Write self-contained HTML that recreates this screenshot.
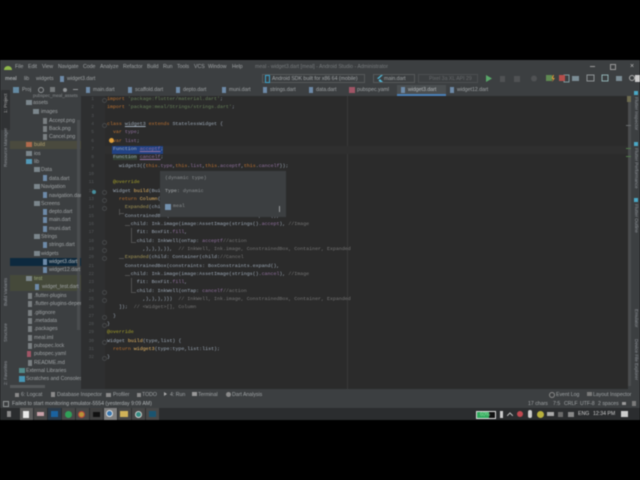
<!DOCTYPE html>
<html><head><meta charset="utf-8"><style>
html,body{margin:0;padding:0;background:#000}
#r{position:relative;width:640px;height:480px;background:#000;overflow:hidden;font-family:"Liberation Sans",sans-serif;color:#a0a4a6;font-size:5px;filter:blur(.5px)}
#r div,#r pre,#r svg{position:absolute}
.t{white-space:nowrap;line-height:8px;font-size:5.2px}
pre.c{margin:0;left:107px;font:4.97px/8px "Liberation Mono",monospace;color:#a0adbb}
.k{color:#bd7230}.s{color:#67825a}.g{color:#767676}.y{color:#a8a328}.f{color:#eebb66}.p{color:#9272a0}.u{color:#a89a58}
.l{left:84px;width:10px;text-align:right;font:4.5px/8px "Liberation Mono",monospace;color:#55585a}
.v{white-space:nowrap;font-size:4.6px;line-height:6px;transform-origin:0 0;color:#90949a}
.fd{width:6px;height:5px;background:#7b868c}
.df{width:4px;height:6px;background:#6d8aa8}
.ff{width:4px;height:6px;background:#7a7f82}
.fo{width:3px;height:3px;border:1px solid #464849;border-radius:50%;left:102px}
.tb{top:408px;height:12px;width:13px;background:#474747}
</style></head><body><div id="r">
<!-- title -->
<div style="left:0;top:60px;width:640px;height:36px;background:#3c3f41"></div>
<svg style="left:4px;top:64px" width="8" height="6"><path d="M0 6a4 4 0 0 1 8 0z" fill="#8fb84a"/></svg>
<div class="t" style="left:15px;top:63px">File</div><div class="t" style="left:28px;top:63px">Edit</div><div class="t" style="left:42px;top:63px">View</div><div class="t" style="left:58px;top:63px">Navigate</div><div class="t" style="left:83px;top:63px">Code</div><div class="t" style="left:100px;top:63px">Analyze</div><div class="t" style="left:123px;top:63px">Refactor</div><div class="t" style="left:147px;top:63px">Build</div><div class="t" style="left:163px;top:63px">Run</div><div class="t" style="left:177px;top:63px">Tools</div><div class="t" style="left:194px;top:63px">VCS</div><div class="t" style="left:208px;top:63px">Window</div><div class="t" style="left:232px;top:63px">Help</div>
<div class="t" style="left:255px;top:63px;color:#777b7d">meal - widget3.dart [meal] - Android Studio - Administrator</div>
<div style="left:590px;top:66px;width:5px;height:1px;background:#999"></div><div style="left:610px;top:64px;width:4px;height:4px;border:1px solid #999"></div><div class="t" style="left:630px;top:63px;font-size:7px;color:#bbb">×</div>
<!-- nav bar -->
<div class="t" style="left:5px;top:75px;font-weight:bold">meal</div><div class="t" style="left:24px;top:75px">lib</div><div class="t" style="left:36px;top:75px">widgets</div><div class="df" style="left:60px;top:76px"></div><div class="t" style="left:67px;top:75px">widget3.dart</div>
<div style="left:262px;top:74px;width:103px;height:9px;border:1px solid #555859;box-sizing:border-box"></div>
<div style="left:265px;top:75px;width:3px;height:6px;border:1px solid #3aa0c8"></div>
<div class="t" style="left:272px;top:75px">Android SDK built for x86 64 (mobile)</div>
<div style="left:373px;top:74px;width:42px;height:9px;border:1px solid #555859;box-sizing:border-box"></div>
<svg style="left:377px;top:75px" width="6" height="7"><path d="M0 3.500L4 0h2L1.500 4zM3 7L1.500 5.500 3 4l3 3z" fill="#4fb6d6"/></svg>
<div class="t" style="left:384px;top:75px">main.dart</div>
<div style="left:418px;top:74px;width:60px;height:9px;border:1px solid #4b4e50;box-sizing:border-box"></div>
<div class="t" style="left:429px;top:75px;color:#66696b">Pixel 3a XL API 29</div>
<svg style="left:484px;top:74px" width="100" height="9">
<path d="M2 1l6 3.500-6 3.500z" fill="#59a869"/><rect x="16" y="2" width="5" height="6" fill="#505254"/><rect x="30" y="2" width="6" height="6" fill="#505254"/><circle cx="50" cy="4.500" r="3" fill="#505254"/><path d="M69 1l-2 4h2l-1 3 3-4h-2l1-3z" fill="#d89a3a"/><rect x="80" y="1" width="5" height="7" fill="none" stroke="#7f9a9f"/></svg>
<svg style="left:584px;top:74px" width="56" height="9"><rect x="3" y="1" width="7" height="6" fill="none" stroke="#8f9395"/><rect x="18" y="1" width="6" height="6" fill="none" stroke="#8fb0b2"/><rect x="32" y="2" width="6" height="5" fill="#7b8d95"/><circle cx="48" cy="4" r="2.500" fill="none" stroke="#aaa"/></svg>
<div style="left:546px;top:75px;width:6px;height:6px;background:#5f8a52"></div>
<div style="left:559px;top:75px;width:6px;height:6px;background:#b54e4b"></div>
<div style="left:572px;top:76px;width:7px;height:5px;background:#7b8d95"></div>
<div style="left:635px;top:75px;width:5px;height:7px;background:#ccc"></div>
<!-- tool row left -->
<div style="left:13px;top:87px;width:6px;height:6px;background:#648aa2"></div><div class="t" style="left:22px;top:86px">Proj</div>
<div style="left:38px;top:87px;width:4px;height:4px;border:1px solid #909496;border-radius:50%"></div>
<div style="left:50px;top:87px;width:5px;height:5px;background:#75797b"></div><div style="left:63px;top:88px;width:4px;height:4px;border-radius:50%;background:#909496"></div><div style="left:73px;top:89px;width:5px;height:1px;background:#909496"></div>
<!-- tabs -->
<div style="left:397px;top:85px;width:49px;height:11px;background:#4a4e50"></div><div style="left:397px;top:94px;width:49px;height:2px;background:#4a80b7"></div>
<div class="df" style="left:86px;top:87px"></div><div class="t" style="left:93px;top:86px">main.dart</div>
<div class="df" style="left:128px;top:87px"></div><div class="t" style="left:135px;top:86px">scaffold.dart</div>
<div class="df" style="left:176px;top:87px"></div><div class="t" style="left:183px;top:86px">depto.dart</div>
<div class="df" style="left:222px;top:87px"></div><div class="t" style="left:229px;top:86px">muni.dart</div>
<div class="df" style="left:263px;top:87px"></div><div class="t" style="left:270px;top:86px">strings.dart</div>
<div class="df" style="left:309px;top:87px"></div><div class="t" style="left:316px;top:86px">data.dart</div>
<div style="left:349px;top:87px;width:6px;height:6px;background:#a05566"></div><div class="t" style="left:357px;top:86px">pubspec.yaml</div>
<div class="df" style="left:401px;top:87px"></div><div class="t" style="left:408px;top:86px;color:#b8bcbe">widget3.dart</div>
<div class="df" style="left:450px;top:87px"></div><div class="t" style="left:457px;top:86px">widget12.dart</div>
<!-- left strip -->
<div style="left:0;top:96px;width:10px;height:293px;background:#3c3f41"></div>
<div style="left:1px;top:90px;width:9px;height:40px;background:#303234"></div>
<div class="v" style="left:3px;top:113px;transform:rotate(-90deg);color:#aaa">1: Project</div>
<div class="v" style="left:3px;top:167px;transform:rotate(-90deg)">Resource Manager</div>
<div class="v" style="left:3px;top:306px;transform:rotate(-90deg)">Build Variants</div>
<div class="v" style="left:3px;top:342px;transform:rotate(-90deg)">Structure</div>
<div class="v" style="left:3px;top:385px;transform:rotate(-90deg)">2: Favorites</div>
<!-- project panel -->
<div style="left:10px;top:96px;width:71px;height:293px;background:#3c3f41"></div>
<div style="left:10px;top:141px;width:71px;height:8px;background:#4a4a3e"></div>
<div style="left:10px;top:258px;width:71px;height:8px;background:#0d293e"></div>
<div style="left:10px;top:275px;width:71px;height:16px;background:#45493a"></div>
<div style="left:77px;top:120px;width:3px;height:210px;background:#4a4d4f"></div>
<div style="left:10px;top:385px;width:35px;height:3px;background:#55585a"></div>
<div class="t" style="left:33px;top:92px;font-size:4.5px;color:#8a8e90">pubspec_meal_assets</div>
<div class="fd" style="left:26px;top:100px"></div><div class="t" style="left:33px;top:99px">assets</div>
<div class="fd" style="left:33px;top:109px"></div><div class="t" style="left:41px;top:108px">images</div>
<div class="ff" style="left:43px;top:118px"></div><div class="t" style="left:49px;top:117px">Accept.png</div>
<div class="ff" style="left:43px;top:126px"></div><div class="t" style="left:49px;top:125px">Back.png</div>
<div class="ff" style="left:43px;top:134px"></div><div class="t" style="left:49px;top:133px">Cancel.png</div>
<div class="fd" style="left:26px;top:142px;background:#b06a4c"></div><div class="t" style="left:34px;top:141px;color:#b0a070">build</div>
<div class="fd" style="left:26px;top:151px"></div><div class="t" style="left:34px;top:150px">ios</div>
<div class="fd" style="left:26px;top:159px;background:#5299b8"></div><div class="t" style="left:34px;top:158px">lib</div>
<div class="fd" style="left:34px;top:167px"></div><div class="t" style="left:41px;top:166px">Data</div>
<div class="df" style="left:43px;top:175px"></div><div class="t" style="left:49px;top:175px">data.dart</div>
<div class="fd" style="left:34px;top:184px"></div><div class="t" style="left:41px;top:183px">Navigation</div>
<div class="df" style="left:43px;top:192px"></div><div class="t" style="left:49px;top:192px">navigation.dar</div>
<div class="fd" style="left:34px;top:201px"></div><div class="t" style="left:41px;top:200px">Screens</div>
<div class="df" style="left:43px;top:209px"></div><div class="t" style="left:49px;top:208px">depto.dart</div>
<div class="df" style="left:43px;top:217px"></div><div class="t" style="left:49px;top:216px">main.dart</div>
<div class="df" style="left:43px;top:226px"></div><div class="t" style="left:49px;top:225px">muni.dart</div>
<div class="fd" style="left:34px;top:234px"></div><div class="t" style="left:41px;top:233px">Strings</div>
<div class="df" style="left:43px;top:242px"></div><div class="t" style="left:49px;top:241px">strings.dart</div>
<div class="fd" style="left:34px;top:251px"></div><div class="t" style="left:41px;top:250px">widgets</div>
<div class="df" style="left:43px;top:259px"></div><div class="t" style="left:49px;top:258px;color:#b8bcbe">widget3.dart</div>
<div class="df" style="left:43px;top:267px"></div><div class="t" style="left:49px;top:266px">widget12.dart</div>
<div class="fd" style="left:26px;top:276px"></div><div class="t" style="left:34px;top:275px;color:#9aa87a">test</div>
<div class="df" style="left:35px;top:284px"></div><div class="t" style="left:42px;top:283px">widget_test.dart</div>
<div class="ff" style="left:28px;top:293px"></div><div class="t" style="left:34px;top:292px">.flutter-plugins</div>
<div class="ff" style="left:28px;top:301px"></div><div class="t" style="left:34px;top:300px">.flutter-plugins-depen</div>
<div class="ff" style="left:28px;top:310px"></div><div class="t" style="left:34px;top:309px">.gitignore</div>
<div class="ff" style="left:28px;top:318px"></div><div class="t" style="left:34px;top:317px">.metadata</div>
<div class="ff" style="left:28px;top:326px"></div><div class="t" style="left:34px;top:325px">.packages</div>
<div class="ff" style="left:28px;top:335px"></div><div class="t" style="left:34px;top:334px">meal.iml</div>
<div class="ff" style="left:28px;top:343px"></div><div class="t" style="left:34px;top:342px">pubspec.lock</div>
<div class="ff" style="left:27px;top:351px;background:#a05566"></div><div class="t" style="left:34px;top:350px">pubspec.yaml</div>
<div class="ff" style="left:28px;top:360px"></div><div class="t" style="left:34px;top:359px">README.md</div>
<div style="left:19px;top:368px;width:6px;height:5px;background:#528c8c"></div><div class="t" style="left:26px;top:367px">External Libraries</div>
<div style="left:19px;top:376px;width:6px;height:6px;background:#4796b5"></div><div class="t" style="left:26px;top:375px">Scratches and Consoles</div>
<!-- editor -->
<div style="left:81px;top:96px;width:550px;height:293px;background:#2b2b2b"></div>
<div style="left:81px;top:96px;width:24px;height:293px;background:#2e2f30"></div>
<div style="left:347px;top:96px;width:1px;height:293px;background:#383838"></div>
<div style="left:105px;top:146px;width:523px;height:8px;background:#2f2f2f"></div>
<div style="left:112px;top:146px;width:51px;height:8px;background:#214283"></div>
<div style="left:109px;top:138px;width:5px;height:5px;border-radius:50%;background:#e0a03b"></div>
<div class="l" style="top:96px">1</div><div class="l" style="top:104px">2</div><div class="l" style="top:113px">3</div><div class="l" style="top:121px">4</div><div class="l" style="top:129px">5</div><div class="l" style="top:138px">6</div><div class="l" style="top:146px">7</div><div class="l" style="top:154px">8</div><div class="l" style="top:163px">9</div><div class="l" style="top:171px">10</div><div class="l" style="top:179px">11</div><div class="l" style="top:188px">12</div><div class="l" style="top:196px">13</div><div class="l" style="top:204px">14</div><div class="l" style="top:213px">15</div><div class="l" style="top:221px">16</div><div class="l" style="top:229px">17</div><div class="l" style="top:238px">18</div><div class="l" style="top:246px">19</div><div class="l" style="top:254px">20</div><div class="l" style="top:263px">21</div><div class="l" style="top:271px">22</div><div class="l" style="top:279px">23</div><div class="l" style="top:288px">24</div><div class="l" style="top:296px">25</div><div class="l" style="top:304px">26</div><div class="l" style="top:313px">27</div><div class="l" style="top:321px">28</div><div class="l" style="top:329px">29</div><div class="l" style="top:338px">30</div><div class="l" style="top:346px">31</div><div class="l" style="top:354px">32</div>
<div style="left:92px;top:190px;width:4px;height:4px;border-radius:50%;background:#478f9f"></div>
<div class="fo" style="top:98px"></div><div class="fo" style="top:123px"></div><div class="fo" style="top:190px"></div><div class="fo" style="top:198px"></div><div class="fo" style="top:206px"></div><div class="fo" style="top:240px"></div><div class="fo" style="top:248px"></div><div class="fo" style="top:256px"></div><div class="fo" style="top:290px"></div><div class="fo" style="top:298px"></div><div class="fo" style="top:315px"></div><div class="fo" style="top:323px"></div><div class="fo" style="top:340px"></div><div class="fo" style="top:356px"></div>
<pre class="c" style="top:96px"><span class="k">import</span> <span class="s">'package:flutter/material.dart'</span>;</pre>
<pre class="c" style="top:104px"><span class="k">import</span> <span class="s">'package:meal/Strings/strings.dart'</span>;</pre>
<pre class="c" style="top:121px"><span class="k">class</span> <u>widget3</u> <span class="k">extends</span> StatelessWidget {</pre>
<pre class="c" style="top:129px">  <span class="k">var</span> <span class="p">type</span>;</pre>
<pre class="c" style="top:138px">  <span class="k">var</span> <span class="p">list</span>;</pre>
<pre class="c" style="top:146px">  Function <u class="p">acceptf</u>;</pre>
<pre class="c" style="top:154px">  <span style="background:#344134">Function</span> <u class="p">cancelf</u>;</pre>
<pre class="c" style="top:163px">    widget3({<span class="k">this</span>.<span class="p">type</span>,<span class="k">this</span>.<span class="p">list</span>,<span class="k">this</span>.<span class="p">acceptf</span>,<span class="k">this</span>.<span class="p">cancelf</span>});</pre>
<pre class="c" style="top:179px">  <span class="y">@override</span></pre>
<pre class="c" style="top:188px">  Widget <span class="f">build</span>(BuildContext context) {</pre>
<pre class="c" style="top:196px">    <span class="k">return</span> <span class="f">Column</span>(children: &lt;Widget&gt;[</pre>
<pre class="c" style="top:204px">      <span class="u">Expanded</span>(child: Container(child:<span class="g">//Accept</span></pre>
<pre class="c" style="top:213px">      ConstrainedBox(constraints: BoxConstraints.expand(),</pre>
<pre class="c" style="top:221px">        child: Ink.image(image:AssetImage(strings().<span class="p">accept</span>), <span class="g">//Image</span></pre>
<pre class="c" style="top:229px">          fit: BoxFit.<span class="p">fill</span>,</pre>
<pre class="c" style="top:238px">          child: InkWell(onTap: <span class="p">acceptf</span><span class="g">//action</span></pre>
<pre class="c" style="top:246px">            ,),),),)),  <span class="g">// InkWell, Ink.image, ConstrainedBox, Container, Expanded</span></pre>
<pre class="c" style="top:254px">      <span class="u">Expanded</span>(child: Container(child:<span class="g">//Cancel</span></pre>
<pre class="c" style="top:263px">      ConstrainedBox(constraints: BoxConstraints.expand(),</pre>
<pre class="c" style="top:271px">        child: Ink.image(image:AssetImage(strings().<span class="p">cancel</span>), <span class="g">//Image</span></pre>
<pre class="c" style="top:279px">          fit: BoxFit.<span class="p">fill</span>,</pre>
<pre class="c" style="top:288px">          child: InkWell(onTap: <span class="p">cancelf</span><span class="g">//action</span></pre>
<pre class="c" style="top:296px">            ,),),),)})  <span class="g">// InkWell, Ink.image, ConstrainedBox, Container, Expanded</span></pre>
<pre class="c" style="top:304px">    ]);  <span class="g">// &lt;Widget&gt;[], Column</span></pre>
<pre class="c" style="top:313px">  }</pre>
<pre class="c" style="top:321px">}</pre>
<pre class="c" style="top:329px"><span class="y">@override</span></pre>
<pre class="c" style="top:338px">Widget <span class="f">build</span>(type,list) {</pre>
<pre class="c" style="top:346px">  <span class="k">return</span> <span class="f">widget3</span>(type:type,list:list);</pre>
<pre class="c" style="top:354px">}</pre>
<div style="left:119px;top:209px;width:1px;height:6px;background:#505050"></div><div style="left:119px;top:213px;width:5px;height:1px;background:#505050"></div>
<div style="left:125px;top:225px;width:5px;height:1px;background:#505050"></div><div style="left:131px;top:228px;width:1px;height:14px;background:#505050"></div><div style="left:131px;top:242px;width:5px;height:1px;background:#505050"></div>
<div style="left:119px;top:258px;width:5px;height:1px;background:#505050"></div><div style="left:125px;top:275px;width:5px;height:1px;background:#505050"></div><div style="left:131px;top:278px;width:1px;height:14px;background:#505050"></div><div style="left:131px;top:292px;width:5px;height:1px;background:#505050"></div>
<!-- tooltip -->
<div style="left:160px;top:171px;width:126px;height:46px;background:#3c3f41"></div>
<pre class="c" style="left:165px;top:175px;color:#8a8e90">(dynamic type)</pre>
<pre class="c" style="left:165px;top:188px;color:#8a8e90"><b style="color:#b0b4b6;font-weight:normal">Type:</b> dynamic</pre>
<div style="left:165px;top:204px;width:6px;height:6px;background:#7391ae"></div>
<pre class="c" style="left:173px;top:203px;color:#8a8e90">meal</pre>
<div style="left:279px;top:206px;width:1px;height:6px;background:#9a9ea0"></div>
<!-- scroll & right strip -->
<div style="left:628px;top:96px;width:3px;height:293px;background:#3c3f41"></div>
<div style="left:627px;top:96px;width:4px;height:6px;background:#6e6c50"></div>
<div style="left:628px;top:102px;width:3px;height:284px;background:#4a4c4e"></div>
<div style="left:626px;top:125px;width:5px;height:1px;background:#6a6c6e"></div>
<div style="left:626px;top:148px;width:5px;height:1px;background:#4f7a4a"></div><div style="left:626px;top:156px;width:5px;height:1px;background:#4f7a4a"></div>
<div style="left:631px;top:96px;width:9px;height:293px;background:#3c3f41"></div>
<div style="left:634px;top:91px;width:4px;height:4px;background:#4aa8c6"></div><div style="left:634px;top:142px;width:4px;height:4px;background:#4aa8c6"></div><div style="left:634px;top:198px;width:4px;height:4px;background:#4aa8c6"></div>
<div class="v" style="left:639px;top:97px;transform:rotate(90deg)">Flutter Inspector</div>
<div class="v" style="left:639px;top:148px;transform:rotate(90deg)">Flutter Performance</div>
<div class="v" style="left:639px;top:204px;transform:rotate(90deg)">Flutter Outline</div>
<div class="v" style="left:639px;top:309px;transform:rotate(90deg)">Emulator</div>
<div class="v" style="left:639px;top:339px;transform:rotate(90deg)">Device File Explorer</div>
<!-- bottom -->
<div style="left:0;top:389px;width:640px;height:19px;background:#3c3f41"></div>
<div style="left:15px;top:393px;width:4px;height:4px;background:#8a8a8a"></div><div class="t" style="left:21px;top:391px">6: Logcat</div>
<div style="left:51px;top:392px;width:4px;height:5px;background:#8a8a8a"></div><div class="t" style="left:57px;top:391px">Database Inspector</div>
<div style="left:106px;top:393px;width:5px;height:4px;background:#8a8a8a"></div><div class="t" style="left:113px;top:391px">Profiler</div>
<div style="left:137px;top:393px;width:4px;height:4px;background:#8a8a8a"></div><div class="t" style="left:142px;top:391px">TODO</div>
<div style="left:164px;top:392px;width:0;height:0;border-left:3px solid #aaa;border-top:2.5px solid transparent;border-bottom:2.5px solid transparent"></div><div class="t" style="left:170px;top:391px">4: Run</div>
<div style="left:192px;top:392px;width:5px;height:4px;background:#999"></div><div class="t" style="left:198px;top:391px">Terminal</div>
<div style="left:226px;top:392px;width:5px;height:5px;border-radius:50%;background:#8a8a8a"></div><div class="t" style="left:232px;top:391px">Dart Analysis</div>
<div style="left:549px;top:392px;width:4px;height:4px;border:1px solid #8a8a8a;border-radius:50%"></div><div class="t" style="left:556px;top:391px">Event Log</div>
<div style="left:587px;top:392px;width:5px;height:4px;background:#7a7a7a"></div><div class="t" style="left:593px;top:391px">Layout Inspector</div>
<div style="left:3px;top:401px;width:4px;height:4px;border:1px solid #909496"></div>
<div class="t" style="left:12px;top:400px;color:#b0b4b6">Failed to start monitoring emulator-5554 (yesterday 9:09 AM)</div>
<div class="t" style="left:528px;top:400px">17 chars</div><div class="t" style="left:553px;top:400px">7:5</div><div class="t" style="left:564px;top:400px">CRLF</div><div class="t" style="left:580px;top:400px">UTF-8</div><div class="t" style="left:598px;top:400px">2 spaces</div>
<div style="left:622px;top:402px;width:4px;height:3px;background:#999"></div><div style="left:632px;top:401px;width:4px;height:5px;background:#7a7a7a"></div>
<!-- taskbar -->
<div style="left:0;top:408px;width:640px;height:12px;background:#2b2d2f"></div>
<div style="left:7px;top:411px;width:4px;height:6px;background:#8a8a8a"></div>
<div class="tb" style="left:20px;background:#5c5c5c"></div><div style="left:23px;top:411px;width:6px;height:7px;background:#e8e8e8"></div>
<div class="tb" style="left:34px"></div><div style="left:37px;top:412px;width:7px;height:4px;background:#c8a0a8"></div>
<div class="tb" style="left:48px;background:#2a3a4a"></div><div style="left:51px;top:411px;width:7px;height:6px;background:#1a62a0"></div>
<div class="tb" style="left:62px"></div><div style="left:65px;top:411px;width:7px;height:7px;border-radius:50%;background:#30a058"></div>
<div class="tb" style="left:76px"></div><div style="left:78px;top:411px;width:7px;height:7px;border-radius:50%;background:#b89438;border:1px solid #b8443c;box-sizing:border-box"></div>
<div class="tb" style="left:90px;background:#404040"></div><div style="left:93px;top:412px;width:7px;height:5px;background:#111"></div>
<div class="tb" style="left:104px;background:#808080"></div><div style="left:106px;top:410px;width:7px;height:7px;border-radius:50%;background:#3a78b0;border:1px solid #ddd;box-sizing:border-box"></div>
<div class="tb" style="left:118px"></div><div style="left:120px;top:411px;width:8px;height:6px;background:#d0b258"></div>
<div class="tb" style="left:132px"></div><div style="left:135px;top:411px;width:7px;height:7px;border-radius:50%;background:#368c84;border:1px solid #ccc;box-sizing:border-box"></div>
<div class="tb" style="left:146px"></div><div style="left:149px;top:411px;width:7px;height:6px;background:#1a5470"></div>
<div style="left:476px;top:411px;width:20px;height:8px;background:#111;border:1px solid #ddd;box-sizing:border-box"></div>
<div style="left:477px;top:412px;width:12px;height:6px;background:#2fa85c"></div>
<div class="t" style="left:480px;top:411px;color:#8fe0a0;font-size:5px">60%</div>
<div style="left:500px;top:411px;width:3px;height:7px;background:#ccc"></div>
<svg style="left:507px;top:412px" width="6" height="4"><path d="M0 4l3-3 3 3" fill="none" stroke="#bbb"/></svg>
<div style="left:517px;top:411px;width:6px;height:6px;border-radius:50%;background:#c04850"></div>
<div style="left:528px;top:410px;width:4px;height:8px;border-radius:2px;background:#ccc"></div>
<div style="left:537px;top:411px;width:7px;height:7px;border-radius:50%;background:#b8b03c"></div>
<div style="left:547px;top:412px;width:7px;height:4px;background:#aaa"></div>
<div style="left:558px;top:412px;width:5px;height:5px;background:#6a6a6a"></div>
<div style="left:568px;top:412px;width:6px;height:5px;background:#888"></div>
<div class="t" style="left:578px;top:410px;color:#ccc">ENG</div>
<div class="t" style="left:593px;top:410px;color:#ccc">12:34 PM</div>
<div style="left:621px;top:411px;width:7px;height:6px;background:#ccc"></div>
</div></body></html>
